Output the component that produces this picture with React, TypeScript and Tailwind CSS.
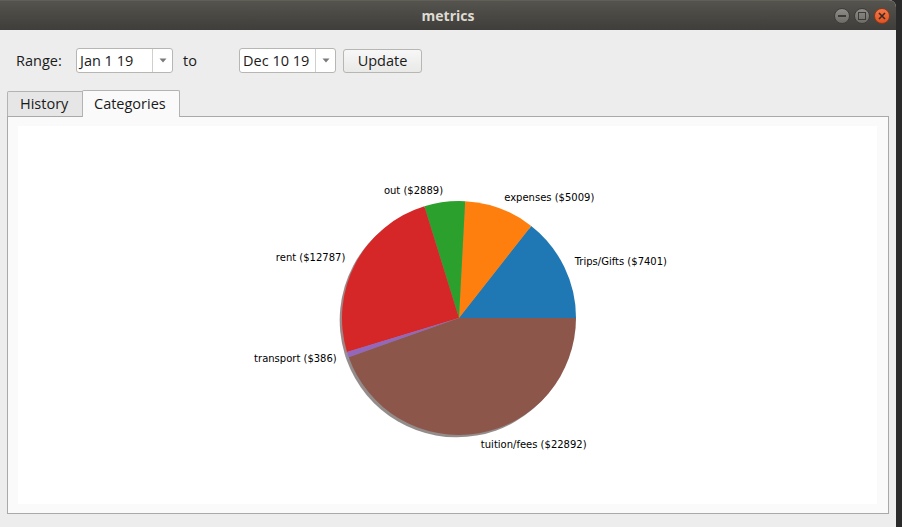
import React from "react";

const data = [
  { label: "Trips/Gifts ($7401)", v: 7401, c: "#1f77b4" },
  { label: "expenses ($5009)", v: 5009, c: "#ff7f0e" },
  { label: "out ($2889)", v: 2889, c: "#2ca02c" },
  { label: "rent ($12787)", v: 12787, c: "#d62728" },
  { label: "transport ($386)", v: 386, c: "#9467bd" },
  { label: "tuition/fees ($22892)", v: 22892, c: "#8c564b" },
];

function shade(hex: string) {
  const n = parseInt(hex.slice(1), 16);
  const r = Math.round(((n >> 16) & 255) * 0.3);
  const g = Math.round(((n >> 8) & 255) * 0.3);
  const b = Math.round((n & 255) * 0.3);
  return `rgb(${r},${g},${b})`;
}

function Pie() {
  const cx = 441;
  const cy = 192;
  const r = 117;
  const total = data.reduce((s, d) => s + d.v, 0);
  let a0 = 0;
  const wedges = data.map((d) => {
    const a1 = a0 + (d.v / total) * 360;
    const t0 = (a0 * Math.PI) / 180;
    const t1 = (a1 * Math.PI) / 180;
    const large = a1 - a0 > 180 ? 1 : 0;
    const path = (ox: number, oy: number) =>
      `M${cx + ox},${cy + oy} L${cx + ox + r * Math.cos(t0)},${cy + oy - r * Math.sin(t0)} A${r},${r} 0 ${large} 0 ${cx + ox + r * Math.cos(t1)},${cy + oy - r * Math.sin(t1)} Z`;
    const mid = ((a0 + a1) / 2) * (Math.PI / 180);
    const lx = cx + 1.1 * r * Math.cos(mid);
    const ly = cy - 1.1 * r * Math.sin(mid);
    a0 = a1;
    return { d, path, lx, ly, left: Math.cos(mid) > 0 };
  });
  return (
    <svg width="859" height="378" viewBox="0 0 859 378" className="block">
      {wedges.map((w, i) => (
        <path key={"s" + i} d={w.path(-2.3, 2.3)} fill={shade(w.d.c)} fillOpacity={0.5} />
      ))}
      {wedges.map((w, i) => (
        <path key={"w" + i} d={w.path(0, 0)} fill={w.d.c} />
      ))}
      {wedges.map((w, i) => (
        <text
          key={"t" + i}
          x={w.lx}
          y={w.ly}
          textAnchor={w.left ? "start" : "end"}
          dominantBaseline="central"
          fontFamily="'DejaVu Sans', sans-serif"
          fontSize="10"
          fill="#000"
        >
          {w.d.label}
        </text>
      ))}
    </svg>
  );
}

function Combo({ text }: { text: string }) {
  return (
    <div className="w-[97px] h-[25px] flex bg-white border border-[#b6b6b3] rounded-[3px]">
      <div className="flex-1 flex items-center pl-[3px] text-[#1a1a1a]">{text}</div>
      <div className="w-[20px] border-l border-[#cfcfcd] flex items-center justify-center">
        <svg width="8" height="5" viewBox="0 0 8 5">
          <path d="M0.5 0.5 L7.5 0.5 L4 4.5 Z" fill="#7a7a78" />
        </svg>
      </div>
    </div>
  );
}

export default function App() {
  return (
    <div className="w-[902px] h-[527px] flex bg-[#2a2a2a] overflow-hidden">
      <div className="w-[896px] h-full flex flex-col bg-[#ededed] rounded-tr-[7px] overflow-hidden font-['Open_Sans',sans-serif] text-[14.5px]">
        <div className="h-[30px] shrink-0 grid grid-cols-[1fr_auto_1fr] items-center bg-gradient-to-b from-[#55534e] to-[#3f3e3a] border-t border-[#625f59]">
          <div />
          <div className="text-[#dfdbd2] font-bold text-[14px] leading-none">metrics</div>
          <div className="flex justify-end items-center gap-[4px] pr-[6px] pt-[1px]">
            <div className="w-[16px] h-[16px] rounded-full bg-gradient-to-b from-[#8f8d88] to-[#6e6c67] border border-[#3e3d39] flex items-center justify-center">
              <div className="w-[8px] h-[2px] bg-[#3c3b37]" />
            </div>
            <div className="w-[16px] h-[16px] rounded-full bg-gradient-to-b from-[#8f8d88] to-[#6e6c67] border border-[#3e3d39] flex items-center justify-center">
              <div className="w-[8px] h-[8px] border-[1.5px] border-[#3c3b37]" />
            </div>
            <div className="w-[16px] h-[16px] rounded-full bg-gradient-to-b from-[#f7784a] to-[#e0531f] border border-[#8a3a1a] flex items-center justify-center">
              <svg width="8" height="8" viewBox="0 0 8 8">
                <path d="M1 1 L7 7 M7 1 L1 7" stroke="#3c2a20" strokeWidth="1.6" />
              </svg>
            </div>
          </div>
        </div>
        <div className="flex-1 flex flex-col">
          <div className="flex items-center pt-[18px] pl-[16px] h-[43px] text-[#1a1a1a]">
            <div className="w-[60px]">Range:</div>
            <Combo text="Jan 1 19" />
            <div className="w-[66px] pl-[10px]">to</div>
            <Combo text="Dec 10 19" />
            <div className="ml-[7px] w-[79px] h-[24px] flex items-center justify-center rounded-[3px] border border-[#b6b6b3] bg-gradient-to-b from-[#f7f7f7] to-[#e9e9e8]">
              Update
            </div>
          </div>
          <div className="flex items-end pl-[7px] mt-[16px] h-[27px] relative z-10 text-[#1a1a1a]">
            <div className="w-[76px] h-[25px] flex items-center pl-[12px] bg-[#e6e6e6] border border-[#b3b3b3] border-b-0 rounded-tl-[2px]">
              History
            </div>
            <div className="-ml-px w-[98px] h-[27px] -mb-px flex items-center pl-[11px] bg-[#fafafa] border border-[#b3b3b3] border-b-0 rounded-t-[2px]">
              Categories
            </div>
          </div>
          <div className="mx-[7px] h-[398px] border border-[#a9a9a9] bg-[#fafafa] pl-[10px] pr-[11px] py-[9px]">
            <div className="w-full h-full bg-white">
              <Pie />
            </div>
          </div>
        </div>
      </div>
    </div>
  );
}
